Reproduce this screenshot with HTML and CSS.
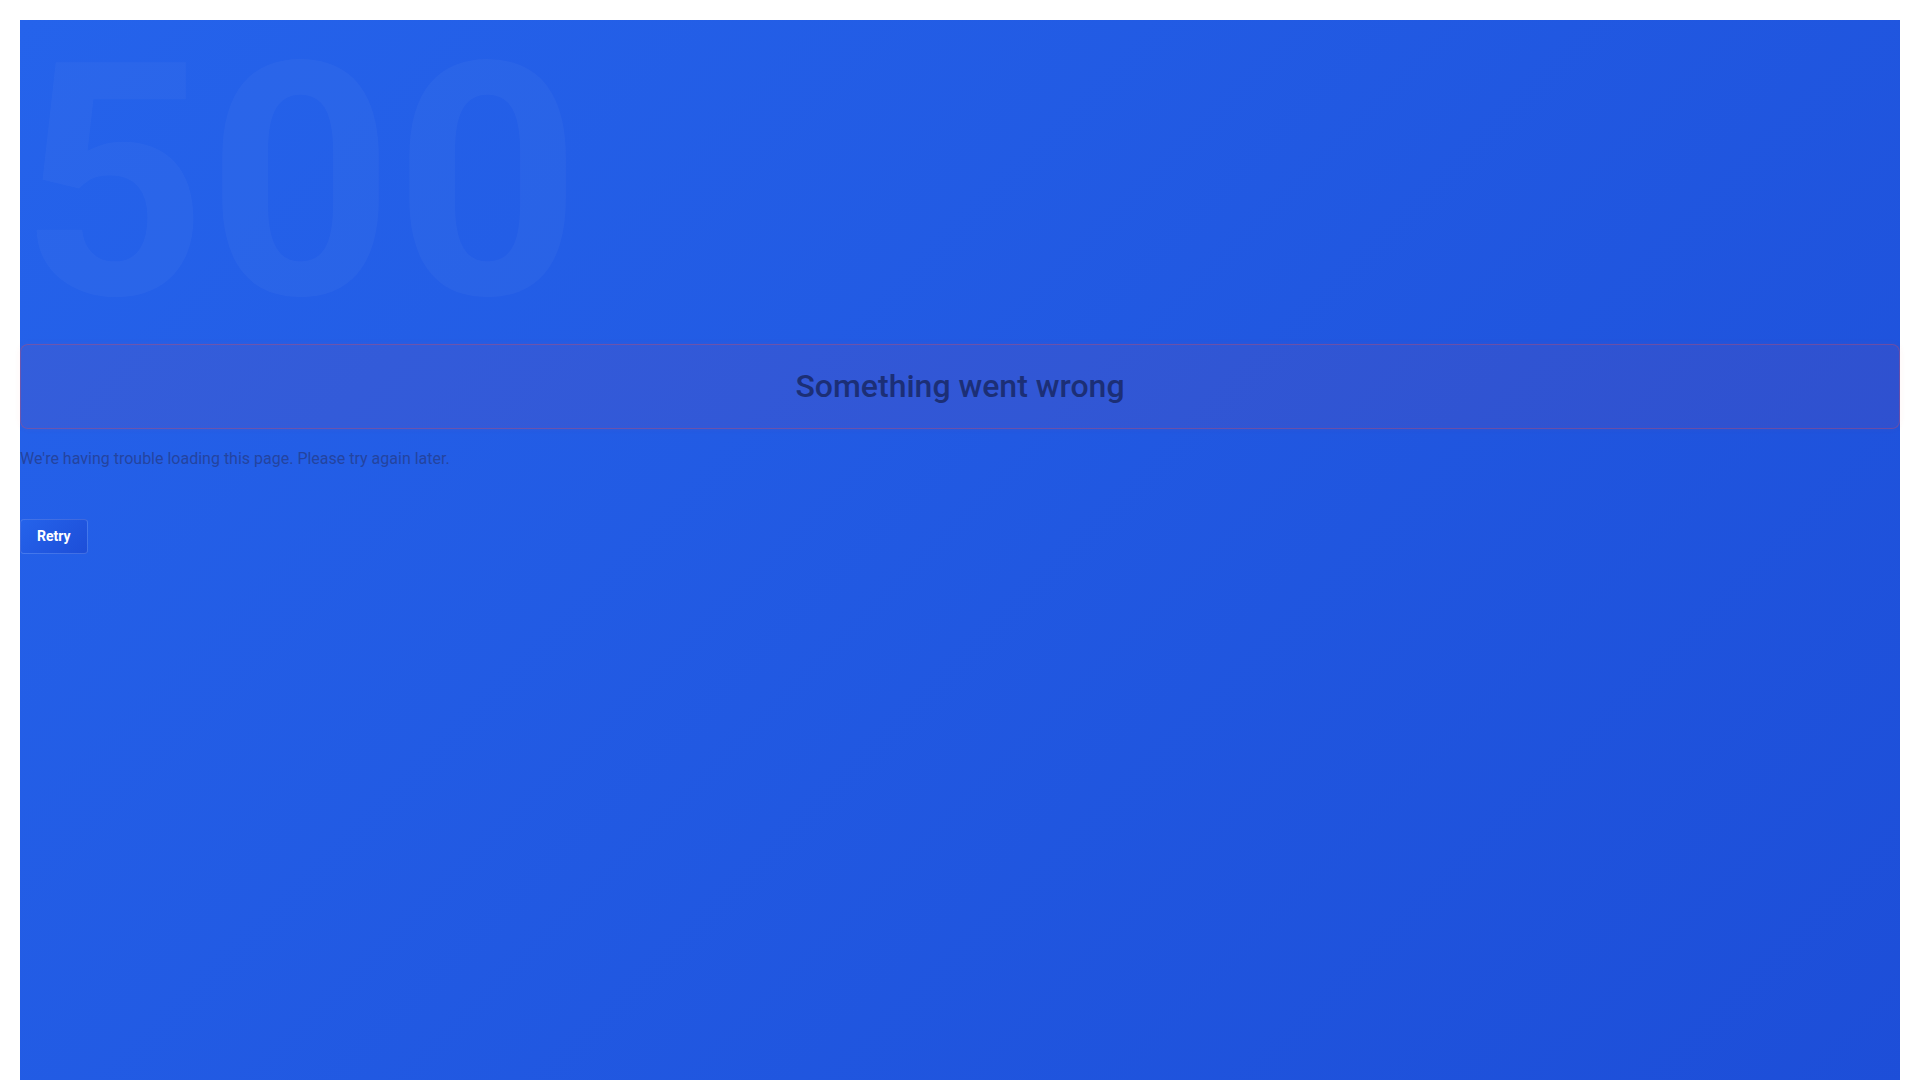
FILE: index.html
```html
<!DOCTYPE html>
<html lang="en">
<head>
<meta charset="utf-8">
<title>Something went wrong</title>
<link rel="stylesheet" href="styles.css">
</head>
<body>
<main class="error-page">
  <div class="error-code" aria-hidden="true">500</div>
  <div class="error-content">
    <div class="error-banner">
      <h1 class="error-title">Something went wrong</h1>
    </div>
    <p class="error-message">We're having trouble loading this page. Please try again later.</p>
    <button class="retry-btn" type="button">Retry</button>
  </div>
</main>
</body>
</html>
```

FILE: styles.css
```css
html, body {
  margin: 0;
  padding: 0;
}
body {
  background: #ffffff;
  padding: 20px 20px 0 20px;
  font-family: Roboto, "Liberation Sans", Arial, sans-serif;
}
.error-page {
  position: relative;
  min-height: 100vh;
  background: linear-gradient(135deg, #2563eb 0%, #1d4ed8 100%);
}
.error-code {
  position: absolute;
  top: 0;
  left: 0;
  font-family: Roboto, "Liberation Sans", sans-serif;
  font-weight: 700;
  font-size: 326px;
  line-height: 1;
  letter-spacing: 0;
  color: rgba(255, 255, 255, 0.03);
  user-select: none;
  white-space: nowrap;
}
.error-content {
  position: relative;
  padding-top: 324px;
  display: flex;
  flex-direction: column;
  align-items: flex-start;
}
.error-banner {
  align-self: stretch;
  background: rgba(239, 68, 68, 0.08);
  border: 1px solid rgba(239, 68, 68, 0.3);
  border-radius: 8px;
  box-shadow: 0 0 6px rgba(239, 68, 68, 0.06);
  padding: 23px 16px;
  text-align: center;
}
.error-title {
  margin: 0;
  font-size: 32px;
  font-weight: 500;
  line-height: 37px;
  color: #1c2f76;
}
.error-message {
  margin: 20px 0 0 0;
  font-size: 16px;
  line-height: 19px;
  color: #24449f;
}
.retry-btn {
  margin-top: 51px;
  padding: 8px 16px;
  font-family: Roboto, "Liberation Sans", sans-serif;
  font-size: 14px;
  font-weight: 700;
  line-height: 17px;
  color: #ffffff;
  background: linear-gradient(135deg, #2563eb 0%, #1d4ed8 100%);
  border: 1px solid rgba(255, 255, 255, 0.15);
  border-radius: 4px;
  cursor: pointer;
}
```
